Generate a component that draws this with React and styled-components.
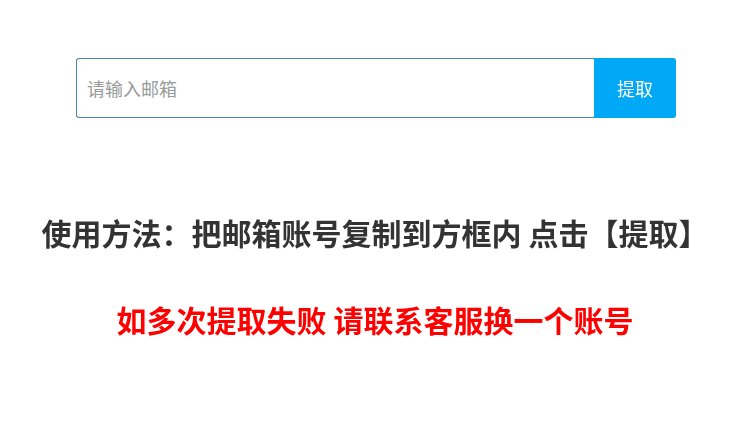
import styled, { createGlobalStyle } from 'styled-components';

const GlobalStyle = createGlobalStyle`
  body {
    margin: 0;
    background: #ffffff;
    font-family: "Microsoft YaHei", "Noto Sans CJK SC", "Noto Sans", sans-serif;
  }
`;

const Page = styled.div`
  width: 750px;
  padding-top: 58px;
`;

const Form = styled.form`
  display: flex;
  width: 600px;
  height: 60px;
  margin: 0 auto 0 76px;
`;

const EmailInput = styled.input`
  flex: 1;
  min-width: 0;
  height: 100%;
  box-sizing: border-box;
  padding: 0 10px;
  border: 1px solid #4d86a9;
  border-right: none;
  border-radius: 3px 0 0 3px;
  font-family: inherit;
  font-size: 18px;
  color: #333;
  outline: none;

  &::placeholder {
    color: #9a9a9a;
  }
`;

const SubmitButton = styled.button`
  width: 82px;
  height: 100%;
  border: none;
  border-radius: 0 3px 3px 0;
  background: #00a8f6;
  color: #ffffff;
  font-family: inherit;
  font-size: 18px;
  cursor: pointer;
`;

const Notice = styled.h2`
  margin: ${(p) => p.$top}px 0 0;
  text-align: center;
  font-size: 30px;
  line-height: 45px;
  font-weight: 700;
  color: ${(p) => p.$color};
`;

export default function App() {
  return (
    <>
      <GlobalStyle />
      <Page>
        <Form onSubmit={(e) => e.preventDefault()}>
          <EmailInput type="text" placeholder="请输入邮箱" autoFocus />
          <SubmitButton type="submit">提取</SubmitButton>
        </Form>
        <Notice $top={92} $color="#333333">
          使用方法：把邮箱账号复制到方框内 点击【提取】
        </Notice>
        <Notice $top={42} $color="#ff0000">
          如多次提取失败 请联系客服换一个账号
        </Notice>
      </Page>
    </>
  );
}
